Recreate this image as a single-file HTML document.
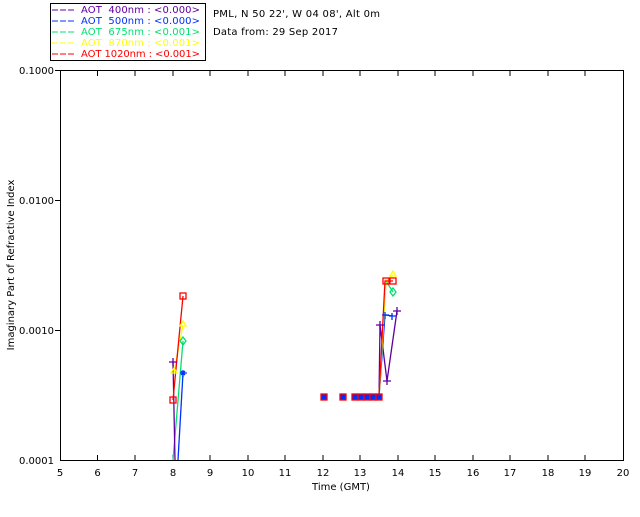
<!DOCTYPE html>
<html><head><style>
body{margin:0;background:#fff;width:640px;height:512px;overflow:hidden}
svg text{font-family:"DejaVu Sans","Liberation Sans",sans-serif;font-size:10px}
</style></head><body>
<svg width="640" height="512" xmlns="http://www.w3.org/2000/svg">
<rect x="50.5" y="3.5" width="155" height="57" fill="#fff" stroke="#000"/>
<g font-size="10">
<line x1="52" y1="10" x2="74" y2="10" stroke="#6000a0" stroke-dasharray="6,2"/><text x="81" y="13" fill="#6000a0" textLength="119" xml:space="preserve">AOT  400nm : &lt;0.000&gt;</text>
<line x1="52" y1="21" x2="74" y2="21" stroke="#0030ff" stroke-dasharray="6,2"/><text x="81" y="24" fill="#0030ff" textLength="119" xml:space="preserve">AOT  500nm : &lt;0.000&gt;</text>
<line x1="52" y1="32" x2="74" y2="32" stroke="#00e070" stroke-dasharray="6,2"/><text x="81" y="35" fill="#00e070" textLength="119" xml:space="preserve">AOT  675nm : &lt;0.001&gt;</text>
<line x1="52" y1="43" x2="74" y2="43" stroke="#ffff00" stroke-dasharray="6,2"/><text x="81" y="46" fill="#ffff00" textLength="119" xml:space="preserve">AOT  870nm : &lt;0.001&gt;</text>
<line x1="52" y1="54" x2="74" y2="54" stroke="#ff0000" stroke-dasharray="6,2"/><text x="81" y="57" fill="#ff0000" textLength="119" xml:space="preserve">AOT 1020nm : &lt;0.001&gt;</text>
</g>
<text x="213" y="17" textLength="167">PML, N 50 22', W 04 08', Alt 0m</text>
<text x="213" y="35" textLength="125">Data from: 29 Sep 2017</text>
<g stroke="#000" fill="none">
<rect x="60.5" y="70.5" width="563" height="390"/>
<line x1="55" y1="70.5" x2="60" y2="70.5"/><line x1="55" y1="200.5" x2="60" y2="200.5"/><line x1="55" y1="330.5" x2="60" y2="330.5"/>
</g>
<g font-size="10" text-anchor="end">
<text x="54" y="74">0.1000</text><text x="54" y="204">0.0100</text><text x="54" y="334">0.0010</text><text x="54" y="464">0.0001</text>
</g>
<g text-anchor="middle" font-size="10">
<text x="60" y="476">5</text><text x="97.5" y="476">6</text><text x="135" y="476">7</text><text x="173" y="476">8</text><text x="210" y="476">9</text><text x="248" y="476">10</text><text x="285" y="476">11</text><text x="323" y="476">12</text><text x="360" y="476">13</text><text x="398" y="476">14</text><text x="435" y="476">15</text><text x="473" y="476">16</text><text x="510" y="476">17</text><text x="548" y="476">18</text><text x="585" y="476">19</text><text x="623" y="476">20</text>
<text x="341" y="490">Time (GMT)</text>
<text transform="translate(14,265) rotate(-90)">Imaginary Part of Refractive Index</text>
</g>
<g stroke="#000">
<path d="M97.5 460v-5M97.5 71v5M135 460v-5M135 71v5M173 460v-5M173 71v5M210 460v-5M210 71v5M248 460v-5M248 71v5M285 460v-5M285 71v5M323 460v-5M323 71v5M360 460v-5M360 71v5M398 460v-5M398 71v5M435 460v-5M435 71v5M473 460v-5M473 71v5M510 460v-5M510 71v5M548 460v-5M548 71v5M585 460v-5M585 71v5"/>
</g>
<g fill="none" stroke-width="1.3">
<path d="M173 460L183 341" stroke="#00e070"/>
<path d="M178 460L183 373" stroke="#0030ff"/>
<path d="M175 460L173 362" stroke="#6000a0"/>
<path d="M174 372L183 325" stroke="#ffff00"/>
<path d="M173 400L183 296" stroke="#ff0000"/>
<rect x="170" y="397" width="6" height="6" stroke="#ff0000"/>
<rect x="180" y="293" width="6" height="6" stroke="#ff0000"/>
<path d="M169 362h8M173 358v8" stroke="#6000a0"/>
<path d="M180 373h7M183 370v7M181 371l4 4M185 371l-4 4" stroke="#0030ff"/>
<path d="M183 337l3 4-3 4-3-4z" stroke="#00e070"/>
<path d="M183 321l3 5h-6z M174 368l3 5h-6z" stroke="#ffff00"/>
</g>
<g fill="none" stroke-width="1.3">
<path d="M355 397H379L380 325L387 381L397 311" stroke="#6000a0"/>
<path d="M379 397L385 315L393 316" stroke="#0030ff"/>
<path d="M379 397L386 281L393 292" stroke="#00e070"/>
<path d="M379 397L386 281L393 275" stroke="#ffff00"/>
<path d="M355 397H379L385 281H393" stroke="#ff0000"/>
<g stroke="#ff0000" fill="#0030ff">
<rect x="321" y="394" width="6" height="6"/><rect x="340" y="394" width="6" height="6"/><rect x="352" y="394" width="6" height="6"/><rect x="358" y="394" width="6" height="6"/><rect x="364" y="394" width="6" height="6"/><rect x="370" y="394" width="6" height="6"/><rect x="376" y="394" width="6" height="6"/>
<rect x="383" y="278" width="6" height="6" fill="none"/><rect x="390" y="278" width="6" height="6" fill="none"/>
</g>
<path d="M376 325h8M380 321v8M383 381h8M387 377v8M393 311h8M397 307v8" stroke="#6000a0"/>
<path d="M382 315h7M385 312v7M389 316h7M392 313v7" stroke="#0030ff"/>
<path d="M393 288l3 4-3 4-3-4z" stroke="#00e070"/>
<path d="M393 271l3 5h-6z" stroke="#ffff00"/>
</g>
</svg>
</body></html>
